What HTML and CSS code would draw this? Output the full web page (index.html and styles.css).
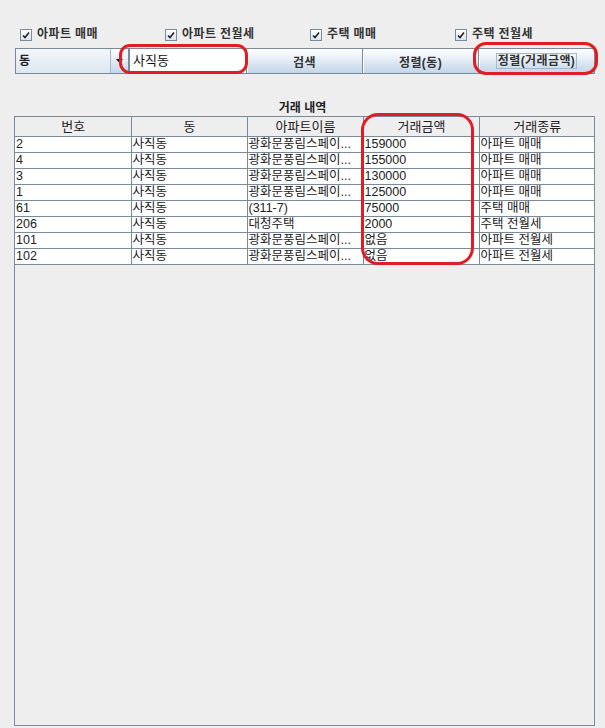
FILE: index.html
```html
<!DOCTYPE html>
<html lang="ko">
<head>
<meta charset="utf-8">
<title>거래 내역</title>
<link rel="stylesheet" href="styles.css">
</head>
<body>
<div class="app">
  <div class="checks">
    <div class="chk"><span class="box"><svg viewBox="0 0 8 8" width="8" height="8"><path d="M1 4.5 L3 6.5 L7 1.5" fill="none" stroke="#222" stroke-width="1.6"/></svg></span><span class="lbl">아파트 매매</span></div>
    <div class="chk"><span class="box"><svg viewBox="0 0 8 8" width="8" height="8"><path d="M1 4.5 L3 6.5 L7 1.5" fill="none" stroke="#222" stroke-width="1.6"/></svg></span><span class="lbl">아파트 전월세</span></div>
    <div class="chk"><span class="box"><svg viewBox="0 0 8 8" width="8" height="8"><path d="M1 4.5 L3 6.5 L7 1.5" fill="none" stroke="#222" stroke-width="1.6"/></svg></span><span class="lbl">주택 매매</span></div>
    <div class="chk"><span class="box"><svg viewBox="0 0 8 8" width="8" height="8"><path d="M1 4.5 L3 6.5 L7 1.5" fill="none" stroke="#222" stroke-width="1.6"/></svg></span><span class="lbl">주택 전월세</span></div>
  </div>
  <div class="controls">
    <div class="combo">
      <span class="combo-text">동</span>
      <span class="combo-btn"><svg viewBox="0 0 7 4" width="7" height="4"><path d="M0 0 H7 L3.5 4 Z" fill="#111"/></svg></span>
    </div>
    <div class="field">사직동</div>
    <div class="btn">검색</div>
    <div class="btn">정렬(동)</div>
    <div class="btn"><span class="focus">정렬(거래금액)</span></div>
  </div>
  <div class="title">거래 내역</div>
  <div class="scroll">
    <table class="grid">
      <colgroup>
        <col class="c"><col class="c"><col class="c"><col class="c"><col class="c-last">
      </colgroup>
      <thead>
        <tr><th>번호</th><th>동</th><th>아파트이름</th><th>거래금액</th><th>거래종류</th></tr>
      </thead>
      <tbody>
        <tr><td>2</td><td>사직동</td><td>광화문풍림스페이...</td><td>159000</td><td>아파트 매매</td></tr>
        <tr><td>4</td><td>사직동</td><td>광화문풍림스페이...</td><td>155000</td><td>아파트 매매</td></tr>
        <tr><td>3</td><td>사직동</td><td>광화문풍림스페이...</td><td>130000</td><td>아파트 매매</td></tr>
        <tr><td>1</td><td>사직동</td><td>광화문풍림스페이...</td><td>125000</td><td>아파트 매매</td></tr>
        <tr><td>61</td><td>사직동</td><td>(311-7)</td><td>75000</td><td>주택 매매</td></tr>
        <tr><td>206</td><td>사직동</td><td>대청주택</td><td>2000</td><td>주택 전월세</td></tr>
        <tr><td>101</td><td>사직동</td><td>광화문풍림스페이...</td><td>없음</td><td>아파트 전월세</td></tr>
        <tr><td>102</td><td>사직동</td><td>광화문풍림스페이...</td><td>없음</td><td>아파트 전월세</td></tr>
      </tbody>
    </table>
  </div>
  <div class="mark mark-field"></div>
  <div class="mark mark-sort"></div>
  <div class="mark mark-col"></div>
</div>
</body>
</html>
```
FILE: styles.css
```css
html, body {
  margin: 0;
  padding: 0;
  background: #eeeeee;
}
.app {
  position: relative;
  width: 605px;
  height: 728px;
  overflow: hidden;
  font-family: "Liberation Sans", "Noto Sans CJK KR", sans-serif;
  font-size: 12px;
  color: #333333;
}
.checks {
  display: grid;
  grid-template-columns: repeat(4, 145px);
  margin-left: 15px;
  padding-top: 27px;
  height: 15px;
}
.chk {
  display: flex;
  align-items: center;
  gap: 5px;
  padding-left: 5px;
  height: 15px;
}
.box {
  box-sizing: border-box;
  width: 12px;
  height: 12px;
  border: 1px solid #7a8a99;
  background: linear-gradient(#ffffff, #d8e4f0);
  display: flex;
  align-items: center;
  justify-content: center;
}
.lbl {
  font-weight: bold;
  line-height: 15px;
  letter-spacing: 0.4px;
}
.controls {
  display: grid;
  grid-template-columns: 114px 118px 116px 116px 116px;
  margin: 6px 0 0 15px;
  height: 26px;
}
.combo {
  display: flex;
  box-sizing: border-box;
  border: 1px solid #7a8a99;
  background: linear-gradient(#f4f7fb, #dce6f1);
}
.combo-text {
  flex: 1;
  font-weight: bold;
  line-height: 24px;
  padding-left: 3px;
  color: #222;
}
.combo-btn {
  width: 17px;
  border-left: 1px solid #a9b8c7;
  background: linear-gradient(#ffffff, #c4d6e8);
  display: flex;
  align-items: center;
  justify-content: center;
}
.field {
  box-sizing: border-box;
  border: 1px solid #7a8a99;
  background: #ffffff;
  line-height: 24px;
  padding-left: 3px;
  font-size: 13px;
  color: #111;
}
.btn {
  box-sizing: border-box;
  border: 1px solid #7a8a99;
  border-left: none;
  background: linear-gradient(#ffffff 0%, #e4edf6 45%, #c2d5e8 100%);
  box-shadow: inset 1px 1px 0 #ffffff;
  display: flex;
  align-items: center;
  justify-content: center;
  font-weight: bold;
  color: #333;
  letter-spacing: 0.4px;
}
.focus {
  border: 1px solid #a3b8cc;
  line-height: 14px;
  padding: 0 1px;
}
.title {
  margin-top: 26px;
  height: 16px;
  line-height: 16px;
  text-align: center;
  font-weight: bold;
  color: #222;
}
.scroll {
  box-sizing: border-box;
  margin-left: 14px;
  width: 581px;
  height: 610px;
  border: 1px solid #7a8a99;
  background: #eeeeee;
}
.grid {
  border-collapse: collapse;
  table-layout: fixed;
  width: 579px;
}
.grid col.c {
  width: 116px;
}
.grid col.c-last {
  width: 115px;
}
.grid th, .grid td {
  padding: 0 0 0 1px;
  overflow: hidden;
  white-space: nowrap;
  border-right: 1px solid #7a8a99;
  border-bottom: 1px solid #7a8a99;
}
.grid th:last-child, .grid td:last-child {
  border-right: none;
}
.grid th {
  height: 19px;
  background: #eeeeee;
  font-weight: normal;
  text-align: center;
  line-height: 19px;
  font-size: 13px;
  color: #222;
}
.grid td {
  height: 15px;
  background: #ffffff;
  line-height: 15px;
  font-size: 12.5px;
  color: #222;
}
.mark {
  position: absolute;
  box-sizing: border-box;
  border: 3px solid #e01c24;
}
.mark-field {
  left: 119px;
  top: 44px;
  width: 129px;
  height: 30px;
  border-radius: 11px;
}
.mark-sort {
  left: 473px;
  top: 42px;
  width: 125px;
  height: 33px;
  border-radius: 13px;
}
.mark-col {
  left: 361px;
  top: 113px;
  width: 113px;
  height: 152px;
  border-radius: 17px;
}
```
